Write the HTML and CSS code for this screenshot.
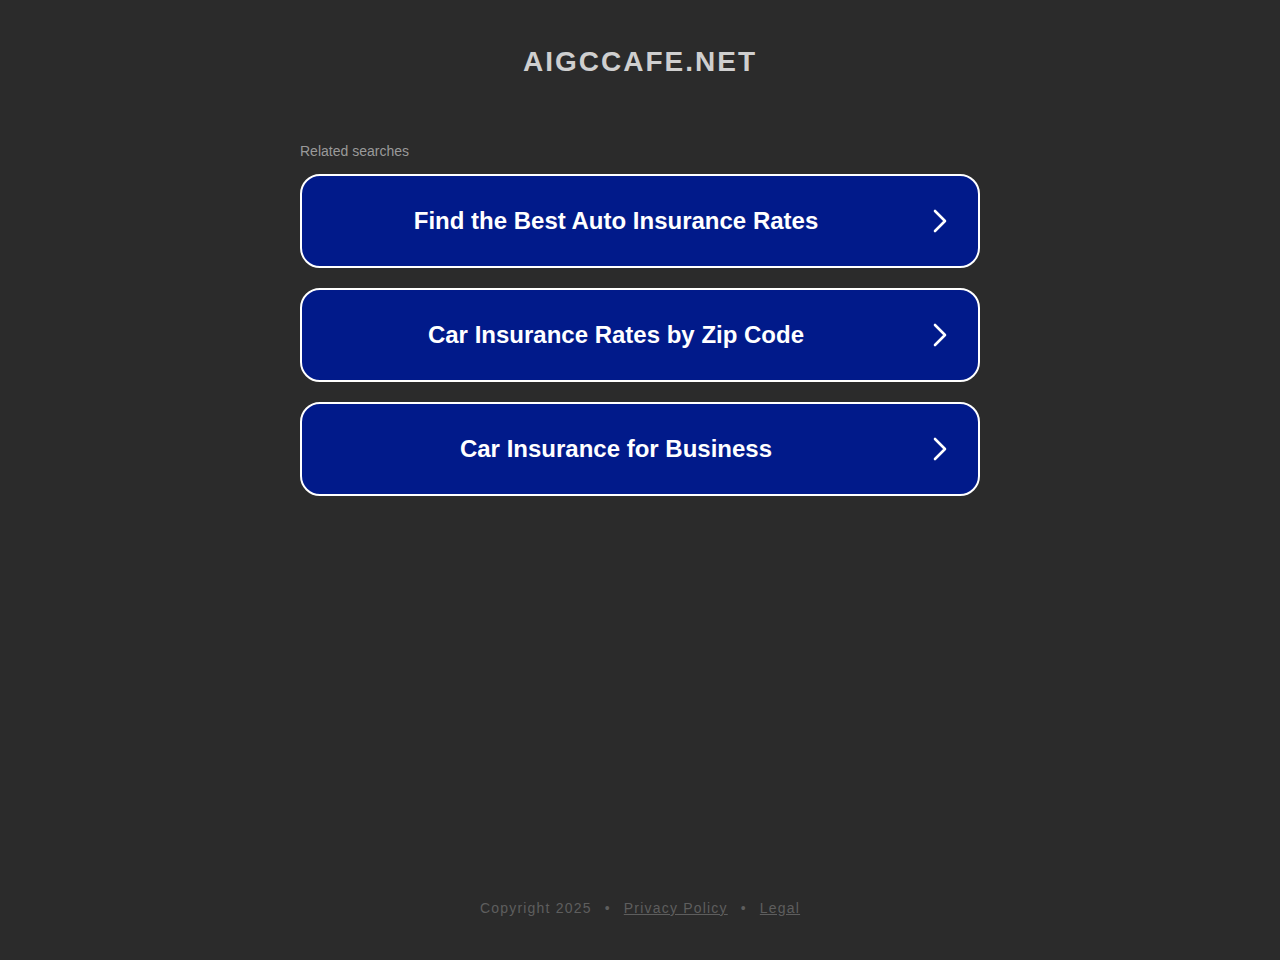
FILE: index.html
```html
<!DOCTYPE html>
<html lang="en">
<head>
<meta charset="utf-8">
<title>aigccafe.net</title>
<link rel="stylesheet" href="styles.css">
</head>
<body>
<div class="page">
  <header class="header">
    <h1 class="domain">AIGCCAFE.NET</h1>
  </header>
  <main class="main">
    <div class="related">Related searches</div>
    <div class="links">
      <a class="link" href="#"><span class="link-text">Find the Best Auto Insurance Rates</span><svg class="chev" viewBox="0 0 16 24" width="16" height="24"><path d="M3 2 L13 12 L3 22" fill="none" stroke="#fff" stroke-width="2.6" stroke-linecap="round" stroke-linejoin="round"/></svg></a>
      <a class="link" href="#"><span class="link-text">Car Insurance Rates by Zip Code</span><svg class="chev" viewBox="0 0 16 24" width="16" height="24"><path d="M3 2 L13 12 L3 22" fill="none" stroke="#fff" stroke-width="2.6" stroke-linecap="round" stroke-linejoin="round"/></svg></a>
      <a class="link" href="#"><span class="link-text">Car Insurance for Business</span><svg class="chev" viewBox="0 0 16 24" width="16" height="24"><path d="M3 2 L13 12 L3 22" fill="none" stroke="#fff" stroke-width="2.6" stroke-linecap="round" stroke-linejoin="round"/></svg></a>
    </div>
  </main>
  <footer class="footer">
    <span>Copyright 2025</span><span class="dot">•</span><a href="#">Privacy Policy</a><span class="dot">•</span><a href="#">Legal</a>
  </footer>
</div>
</body>
</html>
```

FILE: styles.css
```css
html, body {
  margin: 0;
  padding: 0;
  background: #2b2b2b;
  font-family: "Liberation Sans", Arial, sans-serif;
}
.page {
  min-height: 100vh;
  display: flex;
  flex-direction: column;
}
.header {
  padding-top: 46px;
  text-align: center;
}
.domain {
  margin: 0;
  font-size: 28px;
  line-height: 32px;
  font-weight: bold;
  color: #cfcfcf;
  letter-spacing: 2px;
}
.main {
  width: 680px;
  margin: 65px auto 0;
}
.related {
  font-size: 14px;
  line-height: 16px;
  color: #9a9a9a;
  margin-bottom: 15px;
}
.links {
  display: flex;
  flex-direction: column;
  gap: 20px;
}
.link {
  display: flex;
  align-items: center;
  height: 94px;
  box-sizing: border-box;
  border: 2px solid #ffffff;
  border-radius: 20px;
  background: #011a8a;
  color: #ffffff;
  text-decoration: none;
  padding-right: 30px;
}
.link-text {
  flex: 1;
  text-align: center;
  font-size: 24px;
  font-weight: bold;
  margin-right: 2px;
}
.chev {
  display: block;
  flex: none;
}
.footer {
  margin-top: auto;
  padding-bottom: 44px;
  text-align: center;
  font-size: 14px;
  line-height: 16px;
  color: #5e5e5e;
  letter-spacing: 1.2px;
}
.footer a {
  color: #5e5e5e;
}
.dot {
  margin: 0 13px;
}
```
